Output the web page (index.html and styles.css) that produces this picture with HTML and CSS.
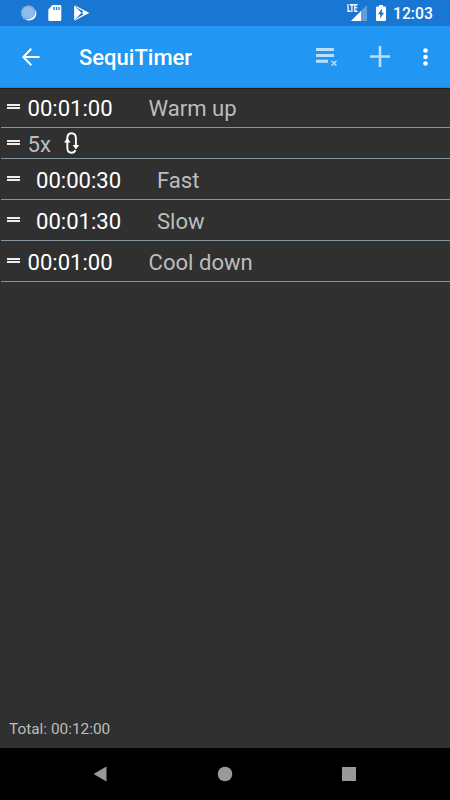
FILE: index.html
```html
<!DOCTYPE html>
<html lang="en">
<head>
    <meta charset="UTF-8">
    <meta name="viewport" content="width=device-width, initial-scale=1.0">
    <title>SequiTimer</title>
    <link rel="stylesheet" href="styles.css">
</head>
<body>
    <div class="status-bar">
        <svg class="sync" width="18" height="18" viewBox="0 0 18 18">
            <circle cx="8.500" cy="9" r="7.500" fill="#90bce9"/>
            <circle cx="8" cy="8.500" r="6.500" fill="none" stroke="#5598dc" stroke-width="1.200" stroke-dasharray="1 1.200"/>
            <path d="M15 5.200a7 7 0 0 1-9.500 10A7.800 7.800 0 0 0 15 5.200z" fill="#fff"/>
        </svg>
        <svg class="sd" width="14" height="16" viewBox="0 0 14 16">
            <path d="M4.500 0H12a1.300 1.300 0 0 1 1.300 1.300v13.400A1.300 1.300 0 0 1 12 16H1.600A1.300 1.300 0 0 1 .3 14.700V4.500z" fill="#fff"/>
            <path d="M6 2v3M8.500 2v3M11 2v3" stroke="#1976d2" stroke-width="1.300"/>
        </svg>
        <svg class="play" width="15" height="16" viewBox="0 0 15 16">
            <path d="M.9 1.400v13.200M.8 1l13 6.800L.8 15" fill="none" stroke="#fff" stroke-width="1.300"/>
            <path d="M.5.7 7.500 7.800.5 15.200z" fill="#fff"/>
            <path d="M1 1l9 8.800M1 15l9-9.200" stroke="#1976d2" stroke-width=".5"/>
            <path d="M10 5.700 14.800 8 10 10.300 7.900 8z" fill="#fff"/>
        </svg>
        <span class="spacer"></span>
        <span class="signal">
            <span class="lte">LTE</span>
            <svg width="16" height="16" viewBox="0 0 16 16">
                <path d="M16 0v16H0z" fill="#fff" fill-opacity=".3"/>
                <path d="M10 6v10H0z" fill="#fff"/>
            </svg>
        </span>
        <svg class="battery" width="10" height="16" viewBox="0 0 10 16">
            <path d="M3 0h4v1.500h2a1 1 0 0 1 1 1V15a1 1 0 0 1-1 1H1a1 1 0 0 1-1-1V2.500a1 1 0 0 1 1-1h2z" fill="#fff"/>
            <path d="M5.900 3.500 2 9.300h2.300v4.200L8 7.800H5.900z" fill="#1976d2"/>
        </svg>
        <span class="clock">12:03</span>
    </div>

    <header class="app-bar">
        <svg class="back" width="18" height="18" viewBox="0 0 18 18">
            <path d="M17.500 9H1.500M9.300 .8 1.300 9l8 8.200" fill="none" stroke="#fff" stroke-width="2"/>
        </svg>
        <h1>SequiTimer</h1>
        <svg class="clear-list" width="22" height="20" viewBox="0 0 22 20">
            <path d="M0 2.500h18M0 8.500h18M0 14.200h12" stroke="#bbdefb" stroke-width="3"/>
            <path d="M15.500 13.700l5 5M20.500 13.700l-5 5" stroke="#bbdefb" stroke-width="1.400"/>
        </svg>
        <svg class="add" width="20" height="21" viewBox="0 0 20 21">
            <path d="M0 10.500h20M10 0v21" stroke="#bbdefb" stroke-width="2.600"/>
        </svg>
        <svg class="more" width="5" height="18" viewBox="0 0 5 18">
            <circle cx="2.500" cy="2.500" r="2.300" fill="#fff"/>
            <circle cx="2.500" cy="9" r="2.300" fill="#fff"/>
            <circle cx="2.500" cy="15.500" r="2.300" fill="#fff"/>
        </svg>
    </header>

    <main>
        <ul class="timers">
            <li class="row">
                <span class="handle"></span>
                <span class="time">00:01:00</span>
                <span class="name">Warm up</span>
            </li>
            <li class="row loop">
                <span class="handle"></span>
                <span class="count">5x</span>
                <svg class="repeat" width="16" height="22" viewBox="0 0 16 22">
                    <path d="M3.300 9V6.500C3.300 3 5 1.200 7.500 1.200s4.400 1.800 4.400 5.300V14M3.300 8v7.500c0 3.500 1.700 5.300 4.200 5.300 1.900 0 3.200-.9 3.900-2.700" fill="none" stroke="#fff" stroke-width="1.900"/>
                    <path d="M3.300 6 6.600 10.500H0zM11.900 17.500 8.600 13h6.600z" fill="#fff"/>
                </svg>
            </li>
            <li class="row nested">
                <span class="handle"></span>
                <span class="time">00:00:30</span>
                <span class="name">Fast</span>
            </li>
            <li class="row nested">
                <span class="handle"></span>
                <span class="time">00:01:30</span>
                <span class="name">Slow</span>
            </li>
            <li class="row">
                <span class="handle"></span>
                <span class="time">00:01:00</span>
                <span class="name">Cool down</span>
            </li>
        </ul>
        <p class="total">Total: 00:12:00</p>
    </main>

    <nav class="nav-bar">
        <svg width="14" height="16" viewBox="0 0 14 16"><path d="M13.500 .5v15L.5 8z" fill="#999"/></svg>
        <svg width="16" height="16" viewBox="0 0 16 16"><circle cx="8" cy="8" r="7.300" fill="#999"/></svg>
        <svg width="14" height="14" viewBox="0 0 14 14"><path d="M0 0h14v14H0z" fill="#999"/></svg>
    </nav>
</body>
</html>
```

FILE: styles.css
```css
* {
    box-sizing: border-box;
}
body {
    font-family: Roboto, sans-serif;
    background: #303030;
    color: #fff;
    margin: 0;
    height: 100vh;
    display: flex;
    flex-direction: column;
    overflow: hidden;
}
svg {
    display: block;
    flex: none;
}

/* Status bar */
.status-bar {
    height: 26px;
    flex: none;
    display: flex;
    align-items: center;
    background: #1976d2;
    padding: 0 17px 0 20px;
}
.sd {
    margin-left: 10px;
}
.play {
    margin-left: 12px;
}
.spacer {
    flex: 1;
}
.signal {
    display: flex;
    align-items: flex-end;
    position: relative;
}
.lte {
    position: absolute;
    left: -4px;
    top: 0;
    font-size: 10px;
    line-height: 8px;
    font-weight: 900;
    transform: scaleX(.64);
    transform-origin: left;
}
.battery {
    margin-left: 9px;
}
.clock {
    width: 40px;
    margin-left: 7px;
    font-size: 15.700px;
    font-weight: 500;
    line-height: 26px;
    padding-top: 2px;
}

/* App bar */
.app-bar {
    height: 62px;
    flex: none;
    display: flex;
    align-items: center;
    background: #2196f3;
    border-bottom: 1px solid #1f85d5;
    box-shadow: 0 1px 0 #221f1c;
    padding: 0 22px;
}
.app-bar h1 {
    flex: 1;
    margin: 0 0 0 39px;
    font-size: 22px;
    font-weight: 500;
    line-height: 30px;
    padding-top: 3px;
}
.clear-list {
    margin-right: 32px;
}
.add {
    margin-right: 33px;
}

/* Timer list */
main {
    flex: 1;
    display: flex;
    flex-direction: column;
    justify-content: space-between;
}
.timers {
    list-style: none;
    margin: 0;
    padding: 0 0 0 1px;
}
.row {
    height: 41px;
    display: flex;
    align-items: center;
    border-bottom: 1px solid #84939b;
    padding: 1px 0 0 6px;
    font-size: 22.100px;
    line-height: 30px;
}
.row:first-child {
    height: 40px;
    padding-top: 0;
}
.row.loop {
    height: 31px;
}
.handle {
    width: 13px;
    height: 5px;
    margin: 0 7.500px 3px 0;
    border-top: 2px solid #eee;
    border-bottom: 2px solid #eee;
}
.time {
    width: 121px;
}
.name, .count {
    color: #bdbdbd;
}
.repeat {
    margin: 0 0 2px 13px;
}
.nested .time {
    margin-left: 8.500px;
}
.total {
    margin: 0;
    padding: 0 9px 9px;
    font-size: 15.400px;
    line-height: 20px;
    color: #bdbdbd;
}

/* Navigation buttons */
.nav-bar {
    height: 52px;
    flex: none;
    display: flex;
    align-items: center;
    justify-content: space-between;
    background: #000;
    padding: 0 94px 0 93px;
}
```
